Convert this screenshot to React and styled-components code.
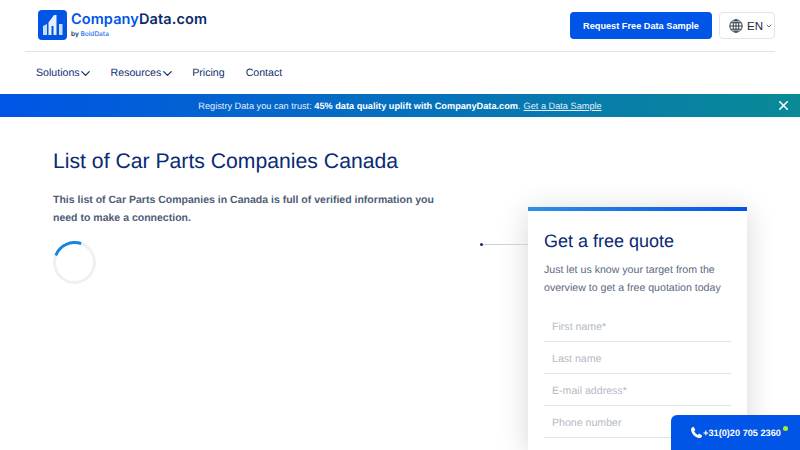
import styled, { createGlobalStyle } from "styled-components";
import { ChevronDown, X } from "lucide-react";

const GlobalStyle = createGlobalStyle`
  html, body {
    margin: 0;
    padding: 0;
    height: 450px;
    overflow: hidden;
    background: #fff;
    font-family: "Liberation Sans", Arial, sans-serif;
    text-rendering: geometricPrecision;
  }
  * { box-sizing: border-box; }
`;

const Header = styled.header`
  padding: 0 25px;
`;

const TopRow = styled.div`
  height: 52px;
  display: flex;
  align-items: center;
  justify-content: space-between;
  border-bottom: 1px solid #dde3ea;
`;

const Logo = styled.a`
  display: flex;
  align-items: center;
  gap: 4px;
  margin-left: 13px;
  margin-top: -1px;
`;

const LogoText = styled.div`
  display: flex;
  flex-direction: column;
`;

const Brand = styled.div`
  font-family: "Inter", sans-serif;
  font-size: 14.5px;
  line-height: 18px;
  font-weight: 600;
  color: #0a2a6b;
  letter-spacing: 0.1px;
  span { color: #0055e6; }
`;

const ByLine = styled.div`
  font-family: "Inter", sans-serif;
  font-size: 6.5px;
  line-height: 10px;
  font-weight: 600;
  color: #0a2a6b;
  span { color: #3b7ff0; }
`;

const TopActions = styled.div`
  display: flex;
  align-items: center;
  gap: 7px;
`;

const SampleButton = styled.button`
  width: 142px;
  height: 27px;
  padding: 0;
  border: 0;
  border-radius: 4px;
  background: #0055e6;
  color: #fff;
  font-family: inherit;
  font-size: 9.2px;
  font-weight: 700;
  white-space: nowrap;
`;

const LangButton = styled.button`
  width: 56px;
  height: 27px;
  display: flex;
  align-items: center;
  gap: 4px;
  padding: 0 0 0 9px;
  background: #fff;
  border: 1px solid #e1e4e8;
  border-radius: 4px;
  color: #1c2b3a;
  font-family: inherit;
  font-size: 11.5px;
  svg:last-child { margin-left: -2px; }
`;

const Nav = styled.nav`
  height: 42px;
  display: flex;
  align-items: center;
  gap: 21px;
  padding-left: 11px;
`;

const NavItem = styled.a`
  display: flex;
  align-items: center;
  font-size: 10.6px;
  color: #12306f;
  svg { margin: 0 -3.5px 0 -1.5px; }
`;

const Banner = styled.div`
  position: relative;
  height: 23px;
  display: flex;
  align-items: center;
  justify-content: center;
  background: linear-gradient(90deg, #0055e6 0%, #0a8a96 100%);
  color: #e4eefb;
  font-size: 9.2px;
  b { color: #fff; }
  u { color: #e4eefb; margin-left: 3px; }
`;

const BannerClose = styled.span`
  position: absolute;
  right: 9px;
  top: 4px;
  display: flex;
  color: #fff;
`;

const Main = styled.main`
  display: flex;
  justify-content: space-between;
  padding: 0 53px;
`;

const Intro = styled.section`
  width: 390px;
  padding-top: 31px;
`;

const Title = styled.h1`
  margin: 0;
  font-size: 21.2px;
  line-height: 28px;
  font-weight: 400;
  color: #0b2a75;
`;

const Lead = styled.p`
  margin: 15px 0 0;
  font-size: 10.53px;
  line-height: 18px;
  font-weight: 700;
  color: #4d5d76;
`;

const Spinner = styled.div`
  width: 43px;
  height: 43px;
  margin-top: 14px;
  border-radius: 50%;
  border: 3.5px solid #f0f0f0;
  border-top-color: #1187e0;
  transform: rotate(-25deg);
`;

const Aside = styled.aside`
  display: flex;
  align-items: flex-start;
  padding-top: 90px;
`;

const Connector = styled.div`
  position: relative;
  width: 46px;
  height: 1px;
  margin-top: 37px;
  background: #c9d2e3;
  &::before {
    content: "";
    position: absolute;
    left: -2px;
    top: -1px;
    width: 3px;
    height: 3px;
    border-radius: 50%;
    background: #0a2a6b;
  }
`;

const Card = styled.div`
  width: 219px;
  height: 243px;
  padding: 20px 16px 0;
  border-top: 4px solid;
  border-image: linear-gradient(90deg, #2f8fe6, #0055e6) 1;
  background: #fff;
  box-shadow: 0 4px 28px rgba(0, 0, 0, 0.16);
`;

const CardTitle = styled.h2`
  margin: 0;
  font-size: 18px;
  line-height: 20px;
  font-weight: 400;
  color: #0b2a75;
`;

const CardText = styled.p`
  margin: 10px 0 13px;
  font-size: 10.6px;
  line-height: 18px;
  color: #5b6a7e;
`;

const Field = styled.div`
  height: 32px;
  display: flex;
  align-items: center;
  padding: 2px 0 0 8px;
  border-bottom: 1px solid #dde3ea;
  font-size: 10.6px;
  color: #b4bac4;
`;

const PhoneWidget = styled.a`
  position: fixed;
  right: 0;
  bottom: 0;
  width: 129px;
  height: 35px;
  display: flex;
  align-items: center;
  justify-content: center;
  background: #0055e6;
  border-radius: 6px 0 0 0;
  color: #fff;
  font-size: 9.2px;
  font-weight: 700;
`;

const OnlineDot = styled.span`
  position: absolute;
  right: 12px;
  top: 11px;
  width: 5px;
  height: 5px;
  border-radius: 50%;
  background: #a6f01e;
`;

const LogoMark = () => (
  <svg width="29" height="30" viewBox="0 0 29 30">
    <rect width="29" height="30" rx="4" fill="#0055e6" />
    <path d="M5 25v-9l4-2v11z" fill="#c9dcf8" />
    <path d="M10.500 25V12.500L16 5h2.500v20h-3V16h-2v9z" fill="#e6effc" />
    <rect x="21" y="14" width="3.500" height="11" fill="#c9dcf8" />
  </svg>
);

const GlobeIcon = () => (
  <svg width="14" height="14" viewBox="0 0 14 14" fill="none" stroke="#1c2b3a" strokeWidth="0.9">
    <circle cx="7" cy="7" r="6.2" />
    <ellipse cx="7" cy="7" rx="2.8" ry="6.2" />
    <path d="M7 .8v12.4M.8 7h12.4M1.700 3.800h10.600M1.700 10.200h10.600" />
  </svg>
);

const PhoneIcon = () => (
  <svg width="13" height="13" viewBox="0 0 24 24" fill="#fff">
    <path d="M6.600 1.500 10 7.200 7.600 9.400c1.300 3 3.900 5.700 7 7l2.300-2.400 5.600 3.400c-.4 2.900-2.700 5.100-5.500 4.800C9.200 21 2.900 14.600 2 7.300 1.700 4.600 3.800 2 6.600 1.500z" />
  </svg>
);

export default function App() {
  return (
    <>
      <GlobalStyle />
      <Header>
        <TopRow>
          <Logo>
            <LogoMark />
            <LogoText>
              <Brand>
                <span>Company</span>Data.com
              </Brand>
              <ByLine>
                by <span>BoldData</span>
              </ByLine>
            </LogoText>
          </Logo>
          <TopActions>
            <SampleButton>Request Free Data Sample</SampleButton>
            <LangButton>
              <GlobeIcon />
              EN
              <ChevronDown size={8} />
            </LangButton>
          </TopActions>
        </TopRow>
        <Nav>
          <NavItem>
            Solutions <ChevronDown size={15} />
          </NavItem>
          <NavItem>
            Resources <ChevronDown size={15} />
          </NavItem>
          <NavItem>Pricing</NavItem>
          <NavItem>Contact</NavItem>
        </Nav>
      </Header>
      <Banner>
        <span>
          Registry Data you can trust: <b>45% data quality uplift with CompanyData.com</b>.
          <u>Get a Data Sample</u>
        </span>
        <BannerClose>
          <X size={15} strokeWidth={2.5} />
        </BannerClose>
      </Banner>
      <Main>
        <Intro>
          <Title>List of Car Parts Companies Canada</Title>
          <Lead>
            This list of Car Parts Companies in Canada is full of verified information you need to
            make a connection.
          </Lead>
          <Spinner />
        </Intro>
        <Aside>
          <Connector />
          <Card>
            <CardTitle>Get a free quote</CardTitle>
            <CardText>
              Just let us know your target from the overview to get a free quotation today
            </CardText>
            <Field>First name*</Field>
            <Field>Last name</Field>
            <Field>E-mail address*</Field>
            <Field>Phone number</Field>
          </Card>
        </Aside>
      </Main>
      <PhoneWidget>
        <PhoneIcon />
        +31(0)20 705 2360
        <OnlineDot />
      </PhoneWidget>
    </>
  );
}
